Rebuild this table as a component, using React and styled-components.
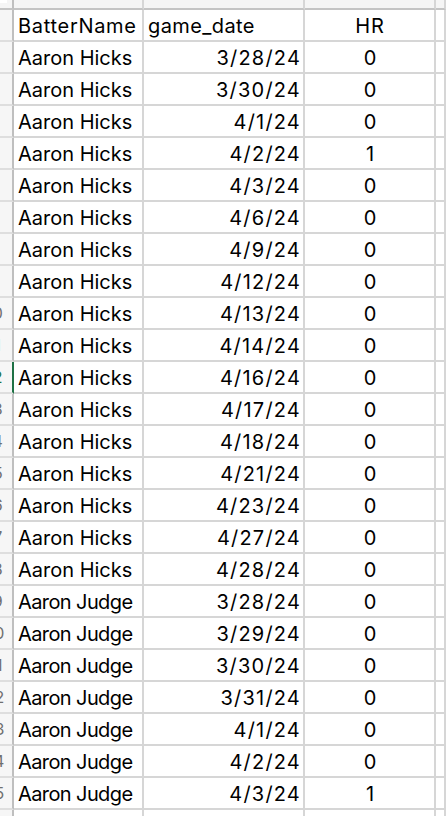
import React from "react";
import styled, { createGlobalStyle } from "styled-components";

const Global = createGlobalStyle`
  html, body { margin: 0; padding: 0; background: #ffffff; overflow: hidden; }
  body { font-family: Inter, "Liberation Sans", Arial, sans-serif; }
`;

const Sheet = styled.div`
  display: grid;
  grid-template-columns: 14px 130px 161px 131px 1fr;
  grid-template-rows: 10px repeat(26, 32px);
  width: 446px;
  height: 816px;
  overflow: hidden;
`;

const Corner = styled.div`
  box-sizing: border-box;
  background: #f5f5f5;
  border-right: 2px solid #bfbfbf;
  border-bottom: 2px solid #c4c4c4;
  display: flex;
  align-items: flex-start;
`;

const CornerMark = styled.div`
  width: 7px;
  height: 3px;
  background: #ffffff;
`;

const ColHead = styled.div`
  box-sizing: border-box;
  background: #f5f5f5;
  border-right: 2px solid #d6d6d6;
  border-bottom: 2px solid #c4c4c4;
`;

const RowHead = styled.div`
  box-sizing: border-box;
  background: #f6f6f6;
  border-right: 2px solid ${(p) => (p.$selected ? "#1e7145" : "#bfbfbf")};
  border-bottom: 2px solid #dedede;
  display: flex;
  justify-content: flex-end;
  align-items: center;
  overflow: hidden;
  padding-right: 3.5px;
`;

const RowNum = styled.span`
  flex-shrink: 0;
  width: 28px;
  text-align: center;
  font-family: Inter, "Liberation Sans", Arial, sans-serif;
  font-size: 16px;
  color: ${(p) => (p.$selected ? "#1e7145" : "#6f6f6f")};
`;

const Cell = styled.div`
  box-sizing: border-box;
  background: #ffffff;
  border-right: 2px solid #d6d6d6;
  border-bottom: 2px solid #d6d6d6;
  padding: 2px ${(p) => (p.$align === "right" ? "2px" : "3px")} 0 4px;
  font-size: 20px;
  line-height: 28px;
  letter-spacing: ${(p) => p.$ls || "0px"};
  color: #000000;
  white-space: nowrap;
  overflow: hidden;
  text-align: ${(p) => p.$align || "left"};
`;

const rows = [
  ["Aaron Hicks", "3/28/24", "0"],
  ["Aaron Hicks", "3/30/24", "0"],
  ["Aaron Hicks", "4/1/24", "0"],
  ["Aaron Hicks", "4/2/24", "1"],
  ["Aaron Hicks", "4/3/24", "0"],
  ["Aaron Hicks", "4/6/24", "0"],
  ["Aaron Hicks", "4/9/24", "0"],
  ["Aaron Hicks", "4/12/24", "0"],
  ["Aaron Hicks", "4/13/24", "0"],
  ["Aaron Hicks", "4/14/24", "0"],
  ["Aaron Hicks", "4/16/24", "0"],
  ["Aaron Hicks", "4/17/24", "0"],
  ["Aaron Hicks", "4/18/24", "0"],
  ["Aaron Hicks", "4/21/24", "0"],
  ["Aaron Hicks", "4/23/24", "0"],
  ["Aaron Hicks", "4/27/24", "0"],
  ["Aaron Hicks", "4/28/24", "0"],
  ["Aaron Judge", "3/28/24", "0"],
  ["Aaron Judge", "3/29/24", "0"],
  ["Aaron Judge", "3/30/24", "0"],
  ["Aaron Judge", "3/31/24", "0"],
  ["Aaron Judge", "4/1/24", "0"],
  ["Aaron Judge", "4/2/24", "0"],
  ["Aaron Judge", "4/3/24", "1"],
];

const SELECTED = 12;

export default function App() {
  return (
    <>
      <Global />
      <Sheet>
        <Corner>
          <CornerMark />
        </Corner>
        <ColHead />
        <ColHead />
        <ColHead />
        <ColHead />

        <RowHead>
          <RowNum>1</RowNum>
        </RowHead>
        <Cell $ls="0.7px">BatterName</Cell>
        <Cell $ls="0.4px">game_date</Cell>
        <Cell $align="center" $ls="1px">HR</Cell>
        <Cell />

        {rows.map((r, i) => {
          const n = i + 2;
          const sel = n === SELECTED;
          return (
            <React.Fragment key={n}>
              <RowHead $selected={sel}>
                <RowNum $selected={sel}>{n}</RowNum>
              </RowHead>
              <Cell $ls={r[0].includes("Judge") ? "-0.6px" : "0px"}>{r[0]}</Cell>
              <Cell $align="right" $ls="1.2px">{r[1]}</Cell>
              <Cell $align="center">{r[2]}</Cell>
              <Cell />
            </React.Fragment>
          );
        })}

        <RowHead>
          <RowNum>26</RowNum>
        </RowHead>
        <Cell />
        <Cell />
        <Cell />
        <Cell />
      </Sheet>
    </>
  );
}
